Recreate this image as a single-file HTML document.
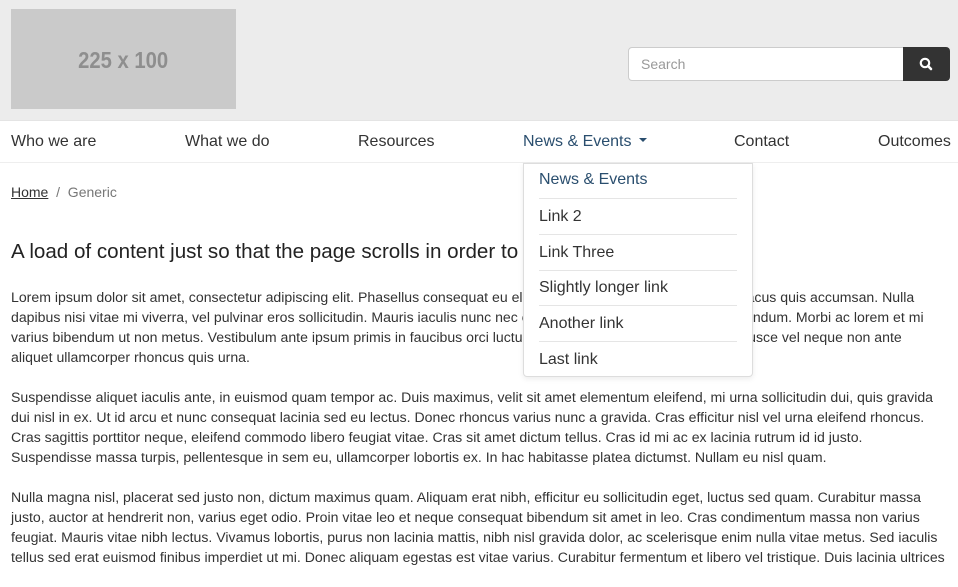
<!DOCTYPE html>
<html><head><meta charset="utf-8"><style>
*{box-sizing:border-box;margin:0;padding:0}
body{width:958px;height:572px;overflow:hidden;background:#fff;font-family:"Liberation Sans",Arial,sans-serif;color:#333;position:relative}
.hdr{position:absolute;left:0;top:0;width:958px;height:120px;background:#ececec}
.logo{position:absolute;left:11px;top:9px;width:225px;height:100px;background:#cacaca;color:#8e8e8e;font:bold 23px "Liberation Sans",sans-serif;text-align:center;line-height:102px}
.logo span{display:inline-block;transform:scaleX(.88)}
.search{position:absolute;left:628px;top:47px;width:276px;height:34px;background:#fff;border:1px solid #ccc;border-radius:4px 0 0 4px;font-size:14px;color:#999;padding:8px 12px}
.btn{position:absolute;left:903px;top:47px;width:47px;height:34px;background:#333;border-radius:0 4px 4px 0}
.nav{position:absolute;left:0;top:120px;width:958px;height:43px;border-top:1px solid #e4e4e4;border-bottom:1px solid #eee;background:#fff}
.nav span{position:absolute;top:12px;font-size:16px;color:#333}
.dd{position:absolute;left:523px;top:163px;width:230px;height:214px;background:#fff;border:1px solid #ddd;border-radius:0 0 4px 4px;box-shadow:0 2px 6px rgba(0,0,0,.08)}
.dd div{position:absolute;left:15px;width:198px;font-size:16px;color:#333;height:36px}
.dd div.b{border-top:1px solid #e5e5e5}
.bc{position:absolute;left:11px;top:184px;font-size:14px;color:#777}
.bc a{color:#333;text-decoration:underline}
h1{position:absolute;left:11px;top:240px;font-size:20.6px;font-weight:normal;color:#222;white-space:nowrap}
.txt{position:absolute;left:11px;top:287px;width:940px;font-size:14.1px;line-height:20px;color:#333;white-space:nowrap}
.txt p{margin-bottom:20px}
</style></head><body>
<div class="hdr">
<div class="logo"><span>225 x 100</span></div>
<div class="search">Search</div>
<div class="btn"><svg width="47" height="34" viewBox="0 0 47 34"><circle cx="22" cy="16" r="4.2" fill="none" stroke="#fff" stroke-width="2.2"/><line x1="25" y1="19" x2="28" y2="22" stroke="#fff" stroke-width="2.6" stroke-linecap="round"/></svg></div>
</div>
<div class="nav">
<span style="left:11px">Who we are</span>
<span style="left:185px">What we do</span>
<span style="left:358px">Resources</span>
<span style="left:523px;color:#2a4e6e">News &amp; Events <svg width="10" height="6" viewBox="0 0 10 6" style="vertical-align:3px;margin-left:2px"><path d="M1 1h8L5 5z" fill="#2a4e6e"/></svg></span>
<span style="left:734px">Contact</span>
<span style="left:878px">Outcomes</span>
</div>
<div class="bc"><a>Home</a> &nbsp;/&nbsp; Generic</div>
<h1>A load of content just so that the page scrolls in order to test the sticky header!</h1>
<div class="txt">
<p>Lorem ipsum dolor sit amet, consectetur adipiscing elit. Phasellus consequat eu elit at maximus tortor. Nunc euismod lacus quis accumsan. Nulla<br>dapibus nisi vitae mi viverra, vel pulvinar eros sollicitudin. Mauris iaculis nunc nec eros fermentum, et vehicula sed bibendum. Morbi ac lorem et mi<br>varius bibendum ut non metus. Vestibulum ante ipsum primis in faucibus orci luctus et ultrices posuere cubilia curae. Fusce vel neque non ante<br>aliquet ullamcorper rhoncus quis urna.</p>
<p>Suspendisse aliquet iaculis ante, in euismod quam tempor ac. Duis maximus, velit sit amet elementum eleifend, mi urna sollicitudin dui, quis gravida<br>dui nisl in ex. Ut id arcu et nunc consequat lacinia sed eu lectus. Donec rhoncus varius nunc a gravida. Cras efficitur nisl vel urna eleifend rhoncus.<br>Cras sagittis porttitor neque, eleifend commodo libero feugiat vitae. Cras sit amet dictum tellus. Cras id mi ac ex lacinia rutrum id id justo.<br>Suspendisse massa turpis, pellentesque in sem eu, ullamcorper lobortis ex. In hac habitasse platea dictumst. Nullam eu nisl quam.</p>
<p>Nulla magna nisl, placerat sed justo non, dictum maximus quam. Aliquam erat nibh, efficitur eu sollicitudin eget, luctus sed quam. Curabitur massa<br>justo, auctor at hendrerit non, varius eget odio. Proin vitae leo et neque consequat bibendum sit amet in leo. Cras condimentum massa non varius<br>feugiat. Mauris vitae nibh lectus. Vivamus lobortis, purus non lacinia mattis, nibh nisl gravida dolor, ac scelerisque enim nulla vitae metus. Sed iaculis<br>tellus sed erat euismod finibus imperdiet ut mi. Donec aliquam egestas est vitae varius. Curabitur fermentum et libero vel tristique. Duis lacinia ultrices</p>
</div>
<div class="dd">
<div style="top:7px;color:#2a4e6e">News &amp; Events</div>
<div class="b" style="top:34px;padding-top:9px">Link 2</div>
<div class="b" style="top:70px;padding-top:9px">Link Three</div>
<div class="b" style="top:106px;padding-top:8px">Slightly longer link</div>
<div class="b" style="top:141px;padding-top:9px">Another link</div>
<div class="b" style="top:177px;padding-top:9px">Last link</div>
</div>
</body></html>
